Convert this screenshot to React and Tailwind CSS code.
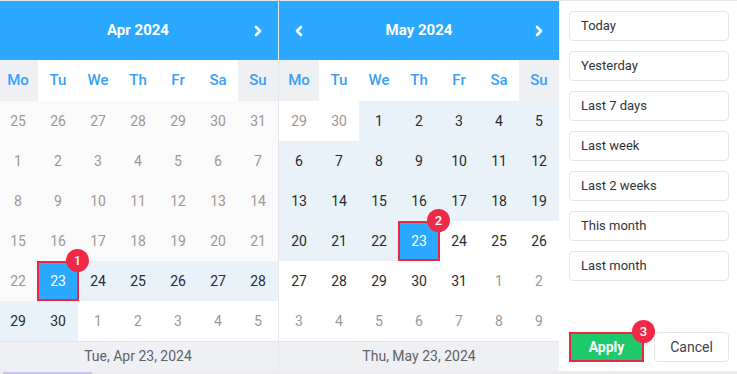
const weekdays = ["Mo", "Tu", "We", "Th", "Fr", "Sa", "Su"];

// each cell: [label, kind, bg] kind: "off" gray text, "on" dark text, "sel" selected (bg holds badge number)
const aprilRows = [
  [["25", "off", "pale"], ["26", "off", "pale"], ["27", "off", "pale"], ["28", "off", "pale"], ["29", "off", "pale"], ["30", "off", "pale"], ["31", "off", "pale"]],
  [["1", "off", "pale"], ["2", "off", "pale"], ["3", "off", "pale"], ["4", "off", "pale"], ["5", "off", "pale"], ["6", "off", "pale"], ["7", "off", "pale"]],
  [["8", "off", "pale"], ["9", "off", "pale"], ["10", "off", "pale"], ["11", "off", "pale"], ["12", "off", "pale"], ["13", "off", "pale"], ["14", "off", "pale"]],
  [["15", "off", "pale"], ["16", "off", "pale"], ["17", "off", "pale"], ["18", "off", "pale"], ["19", "off", "pale"], ["20", "off", "pale"], ["21", "off", "pale"]],
  [["22", "off", "pale"], ["23", "sel", "1"], ["24", "on", "range"], ["25", "on", "range"], ["26", "on", "range"], ["27", "on", "range"], ["28", "on", "range"]],
  [["29", "on", "range"], ["30", "on", "range"], ["1", "off", "white"], ["2", "off", "white"], ["3", "off", "white"], ["4", "off", "white"], ["5", "off", "white"]],
];

const mayRows = [
  [["29", "off", "white"], ["30", "off", "white"], ["1", "on", "range"], ["2", "on", "range"], ["3", "on", "range"], ["4", "on", "range"], ["5", "on", "range"]],
  [["6", "on", "range"], ["7", "on", "range"], ["8", "on", "range"], ["9", "on", "range"], ["10", "on", "range"], ["11", "on", "range"], ["12", "on", "range"]],
  [["13", "on", "range"], ["14", "on", "range"], ["15", "on", "range"], ["16", "on", "range"], ["17", "on", "range"], ["18", "on", "range"], ["19", "on", "range"]],
  [["20", "on", "range"], ["21", "on", "range"], ["22", "on", "range"], ["23", "sel", "2"], ["24", "on", "white"], ["25", "on", "white"], ["26", "on", "white"]],
  [["27", "on", "white"], ["28", "on", "white"], ["29", "on", "white"], ["30", "on", "white"], ["31", "on", "white"], ["1", "off", "white"], ["2", "off", "white"]],
  [["3", "off", "white"], ["4", "off", "white"], ["5", "off", "white"], ["6", "off", "white"], ["7", "off", "white"], ["8", "off", "white"], ["9", "off", "white"]],
];

const presets = ["Today", "Yesterday", "Last 7 days", "Last week", "Last 2 weeks", "This month", "Last month"];

function Badge({ n }) {
  return (
    <span className="absolute -right-[11px] -top-[12px] z-20 flex h-[23px] w-[23px] items-center justify-center rounded-full bg-[#f02a46] text-[13px] font-medium text-white">
      {n}
    </span>
  );
}

function Chevron({ left }) {
  return (
    <svg width="10" height="12" viewBox="0 0 10 12" className="text-white">
      <polyline
        points={left ? "7,2 3,6 7,10" : "3,2 7,6 3,10"}
        fill="none"
        stroke="currentColor"
        strokeWidth="2.6"
        strokeLinecap="round"
        strokeLinejoin="round"
      />
    </svg>
  );
}

function DayCell({ cell }) {
  const [label, kind, bg] = cell;
  if (kind === "sel") {
    return (
      <div className="relative h-10">
        <div className="absolute inset-y-0 -left-[1px] -right-[1px] z-10 flex items-center justify-center border-2 border-[#ee2541] bg-[#2ba8ff] text-[14px] text-white">
          {label}
        </div>
        <Badge n={bg} />
      </div>
    );
  }
  const bgClass = bg === "pale" ? "bg-[#fafafa]" : bg === "range" ? "bg-[#e9f2f9]" : "bg-white";
  const textClass = kind === "off" ? "text-[#9d9891]" : "text-[#2a2c30]";
  return <div className={`flex h-10 items-center justify-center text-[14px] ${bgClass} ${textClass}`}>{label}</div>;
}

function Calendar({ title, rows, footer, prev }) {
  return (
    <div className="flex w-[280px] shrink-0 flex-col">
      <div className="flex h-[59px] items-center justify-between bg-[#2ba8ff] px-[15px]">
        <span className="flex w-[10px] justify-center">{prev && <Chevron left />}</span>
        <span className="text-[15px] font-bold text-white">{title}</span>
        <span className="flex w-[10px] justify-center">
          <Chevron />
        </span>
      </div>
      <div className="grid h-[41px] grid-cols-7">
        {weekdays.map((d, i) => (
          <div
            key={d}
            className={`flex items-center justify-center text-[15px] font-medium text-[#3a9ffb] ${
              i === 0 || i === 6 ? "bg-[#eef0f4]" : "bg-white"
            }`}
          >
            {d}
          </div>
        ))}
      </div>
      {rows.map((row, r) => (
        <div key={r} className="grid grid-cols-7">
          {row.map((cell, c) => (
            <DayCell key={c} cell={cell} />
          ))}
        </div>
      ))}
      <div className="flex h-[30px] items-center justify-center border-t border-[#e1e4e9] bg-[#eef0f4] text-[14px] text-[#5f6266]">
        {footer}
      </div>
    </div>
  );
}

export default function App() {
  return (
    <div
      className="relative h-[374px] w-[737px] overflow-hidden bg-white"
      style={{ fontFamily: "Roboto, 'Liberation Sans', sans-serif" }}
    >
      <div className="h-px bg-[#e3e6ea]" />
      <div className="flex h-[370px]">
        <div className="-ml-[2px] flex">
          <Calendar title="Apr 2024" rows={aprilRows} footer="Tue, Apr 23, 2024" />
        </div>
        <div className="w-px shrink-0 bg-[#e4e7eb]" />
        <Calendar title="May 2024" rows={mayRows} footer="Thu, May 23, 2024" prev />
        <div className="flex w-[178px] shrink-0 flex-col bg-white pb-[9px] pl-[10px] pr-[8px] pt-[10px]">
          <div className="flex flex-col gap-[10px]">
            {presets.map((p) => (
              <div
                key={p}
                className="flex h-[30px] items-center rounded-[4px] border border-[#e2e5ea] pl-[11px] text-[13px] text-[#30353c]"
              >
                {p}
              </div>
            ))}
          </div>
          <div className="mt-auto flex gap-[10px]">
            <div className="relative w-[75px]">
              <div className="flex h-[30px] items-center justify-center border-2 border-[#ee2541] bg-[#1ec96b] text-[14px] font-bold text-white">
                Apply
              </div>
              <Badge n="3" />
            </div>
            <div className="flex h-[30px] w-[75px] items-center justify-center rounded-[4px] border border-[#e2e5ea] text-[14px] text-[#3d434b]">
              Cancel
            </div>
          </div>
        </div>
      </div>
      <div className="relative h-[3px] bg-[#ececee]">
        <div className="absolute bottom-0 left-[3px] h-[2px] w-[89px] bg-[#c8c2f0]" />
      </div>
    </div>
  );
}
